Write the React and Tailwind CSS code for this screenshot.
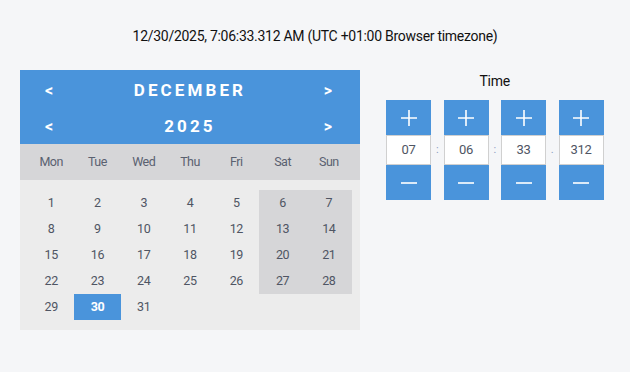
import React from "react";

const days = Array.from({ length: 31 }, (_, i) => i + 1);
const weekdays = ["Mon", "Tue", "Wed", "Thu", "Fri", "Sat", "Sun"];

function Plus() {
  return (
    <svg width="18" height="18" viewBox="0 0 18 18">
      <path d="M9 1v16M1 9h16" stroke="white" strokeWidth="1.6" />
    </svg>
  );
}
function Minus() {
  return (
    <svg width="18" height="18" viewBox="0 0 18 18">
      <path d="M1 9h16" stroke="white" strokeWidth="1.6" />
    </svg>
  );
}

function TimeBox({ value }) {
  return (
    <div className="flex flex-col w-[45px]">
      <div className="h-[35px] bg-[#4a94db] flex items-center justify-center"><Plus /></div>
      <div className="h-[30px] bg-white border border-[#d0d0d0] flex items-center justify-center text-[13px] tracking-[-0.3px] text-[#4f5563]">{value}</div>
      <div className="h-[35px] bg-[#4a94db] flex items-center justify-center"><Minus /></div>
    </div>
  );
}

function Sep({ ch }) {
  return <div className="w-[12.5px] flex items-center justify-center text-[11px] text-[#8a9cc0] h-[100px]">{ch}</div>;
}

export default function App() {
  return (
    <div className="w-[630px] h-[372px] bg-[#f5f6f8] font-['Roboto',sans-serif] relative">
      <div className="pt-[26px] text-center text-[14px] tracking-[-0.28px] text-[#111] leading-[20px]">
        12/30/2025, 7:06:33.312 AM (UTC +01:00 Browser timezone)
      </div>
      <div className="flex mt-[24px] pl-[20px]">
        <div className="w-[340px]">
          <div className="bg-[#4a94db] text-white pt-[2px] h-[74px]">
            <div className="h-[37px] flex items-center justify-between pl-[25px] pr-[28px]">
              <span className="text-[16px] font-bold">&lt;</span>
              <span className="text-[17px] font-bold tracking-[3.1px] pl-[3px]">DECEMBER</span>
              <span className="text-[16px] font-bold">&gt;</span>
            </div>
            <div className="h-[35px] flex items-center justify-between pl-[25px] pr-[28px]">
              <span className="text-[16px] font-bold">&lt;</span>
              <span className="text-[17px] font-bold tracking-[3.1px] pl-[3px]">2025</span>
              <span className="text-[16px] font-bold">&gt;</span>
            </div>
          </div>
          <div className="h-[36px] pt-[1px] bg-[#d6d6d8] grid grid-cols-7 px-[8px] items-center">
            {weekdays.map((d) => (
              <div key={d} className="text-center text-[12.5px] tracking-[-0.5px] text-[#5a6170]">{d}</div>
            ))}
          </div>
          <div className="bg-[#ececec] px-[8px] py-[10px] grid grid-cols-7">
            {days.map((d) => {
              const col = (d - 1) % 7;
              const weekend = col >= 5 && d <= 28;
              const sel = d === 30;
              return (
                <div
                  key={d}
                  className={
                    "h-[26px] pt-[1px] flex items-center justify-center text-[12.5px] tracking-[-0.4px] " +
                    (sel ? "bg-[#4a94db] text-white font-bold" : weekend ? "bg-[#d6d6d8] text-[#4f5563]" : "text-[#4f5563]")
                  }
                >
                  {d}
                </div>
              );
            })}
            {Array.from({ length: 4 }).map((_, i) => (
              <div key={"e" + i} className="h-[26px]" />
            ))}
          </div>
        </div>
        <div className="ml-[26px] flex flex-col items-center">
          <div className="h-[20px] mt-[1px] text-[14px] tracking-[-0.2px] text-[#111] leading-[20px]">Time</div>
          <div className="flex mt-[9px]">
            <TimeBox value="07" />
            <Sep ch=":" />
            <TimeBox value="06" />
            <Sep ch=":" />
            <TimeBox value="33" />
            <Sep ch="." />
            <TimeBox value="312" />
          </div>
        </div>
      </div>
    </div>
  );
}
